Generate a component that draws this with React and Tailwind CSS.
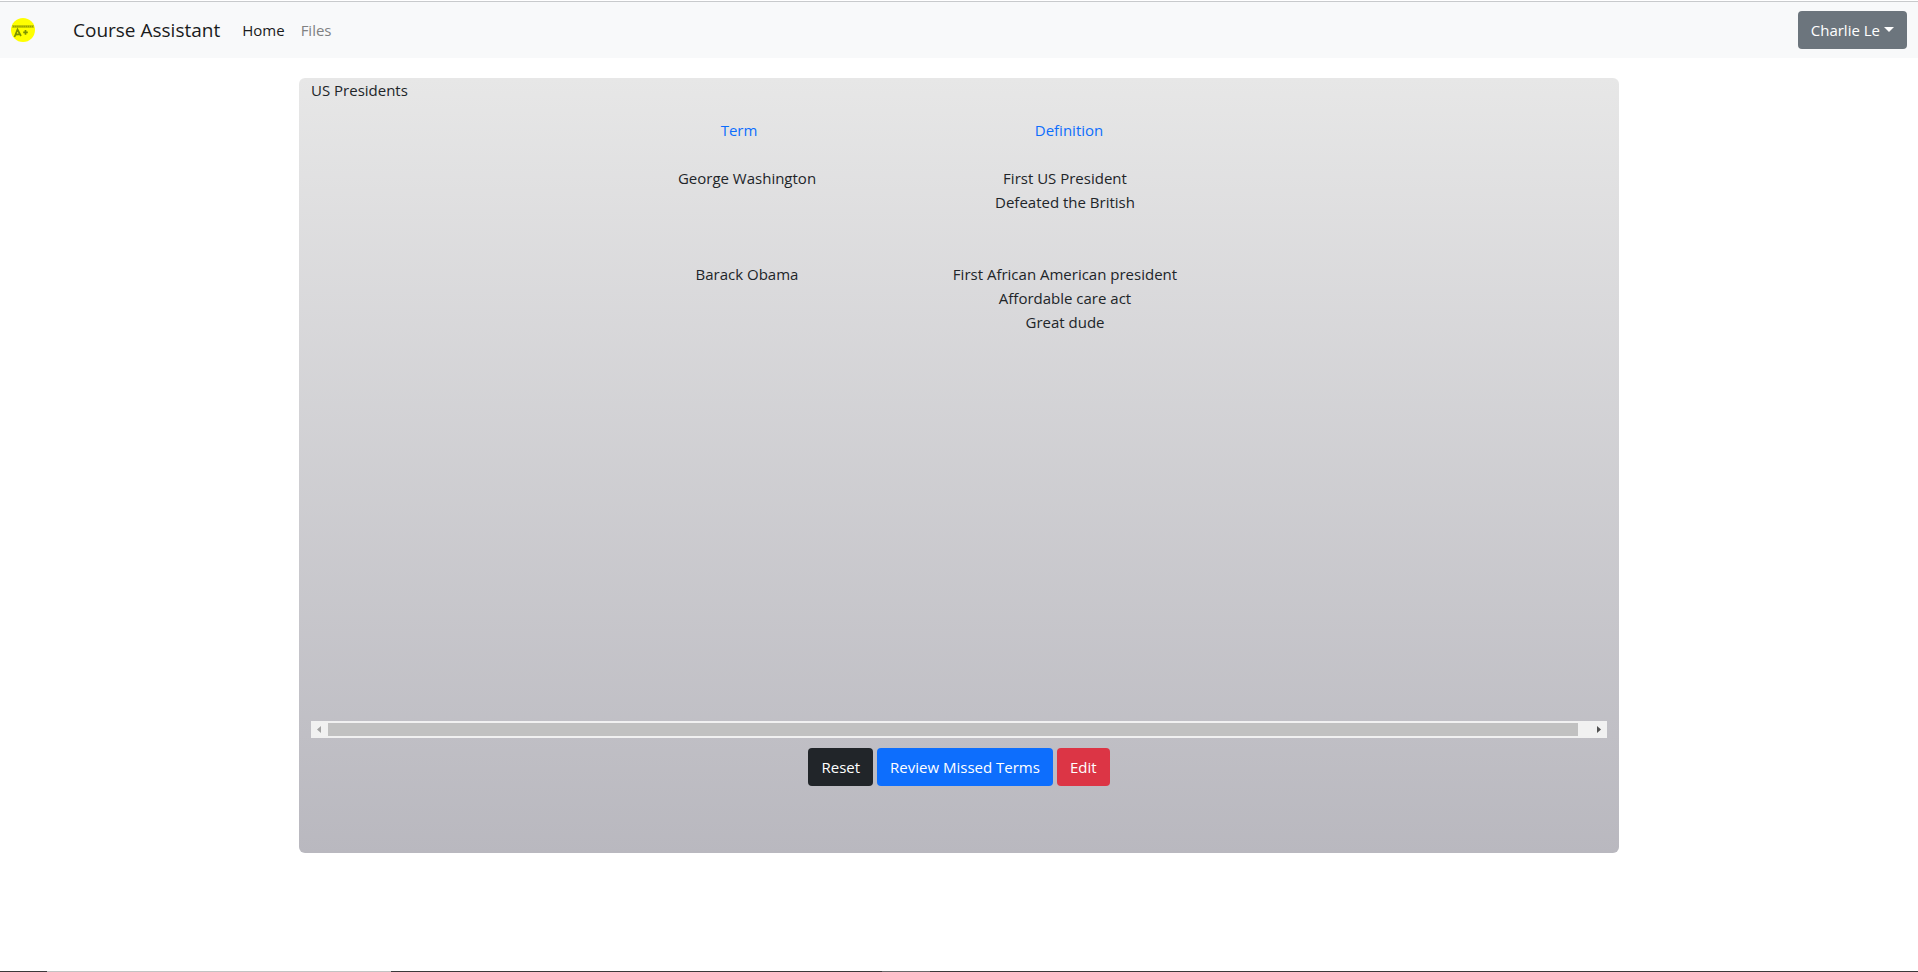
const cards = [
  { term: "George Washington", lines: ["First US President", "Defeated the British"], space: "pb-12" },
  {
    term: "Barack Obama",
    lines: ["First African American president", "Affordable care act", "Great dude"],
    space: "",
  },
];

const columns = "grid grid-cols-[25fr_30fr_30fr_35fr]";
const button = "h-[38px] rounded px-[13px] text-white";

function Logo() {
  return (
    <svg viewBox="0 0 24 24" className="size-6" aria-hidden="true">
      <circle cx="12" cy="12" r="12" fill="#ffff00" />
      <path d="M1 7h22v3H1z" fill="#b4bc00" opacity=".65" />
      <path d="M2 8.500h20" stroke="#5f7000" strokeWidth="1.400" strokeDasharray="1.400 .7" opacity=".5" />
      <path d="M3.500 19l3-7.500 3.500 6.500M5 16.700l4.300-.6M12.200 14.400h4.600M14.500 12v4.800" fill="none" stroke="#7c9200" strokeWidth="1.700" />
    </svg>
  );
}

function Navbar() {
  return (
    <nav className="mt-px flex h-[57px] items-center border-t border-[#c8cacc] bg-[#f8f9fa] px-[11px]">
      <a href="#" aria-label="Logo"><Logo /></a>
      <a href="#" className="ml-[38px] text-[19px] leading-8 text-[#1a1b1c]">Course Assistant</a>
      <a href="#" className="ml-[22px] text-[#1a1b1c]">Home</a>
      <a href="#" className="ml-4 text-[#808182]">Files</a>
      <button type="button" className={`${button} ml-auto flex items-center gap-1 bg-[#6c757d]`}>
        Charlie Le
        <svg viewBox="0 0 10 5" className="mb-0.5 h-[5px] w-[10px]" aria-hidden="true">
          <path d="M0 0h10L5 5z" fill="#fff" />
        </svg>
      </button>
    </nav>
  );
}

function ScrollTrack() {
  return (
    <div className="flex h-[17px] items-center bg-[#f1f1f1]" aria-hidden="true">
      <svg viewBox="0 0 17 17" className="size-[17px]"><path d="M10 5v7L6 8.500z" fill="#a3a3a3" /></svg>
      <div className="h-[13px] flex-1 bg-[#c1c1c1]" />
      <div className="w-3" />
      <svg viewBox="0 0 17 17" className="size-[17px]"><path d="M7 5v7l4-3.500z" fill="#505050" /></svg>
    </div>
  );
}

export default function App() {
  return (
    <div className="flex min-h-screen flex-col bg-white font-['Open_Sans','Noto_Sans',sans-serif] text-[15px] leading-6 text-[#212529]">
      <Navbar />
      <main className="mx-auto mt-5 mb-8 w-full max-w-[1320px] rounded-md bg-linear-to-b from-[#e7e7e7] to-[#b9b8bf] px-3 pb-[67px]">
        <h1>US Presidents</h1>
        <div className="h-[619px] pt-4">
          <table className="block">
            <thead className="-mx-3 block">
              <tr className={columns}>
                <th scope="col" className="col-start-2 font-normal text-[#0d6efd]">Term</th>
                <th scope="col" className="font-normal text-[#0d6efd]">Definition</th>
              </tr>
            </thead>
            <tbody className="block px-3 pt-6">
              {cards.map((card) => (
                <tr key={card.term} className={`${columns} ${card.space}`}>
                  <td className="col-start-2 text-center">{card.term}</td>
                  <td className="text-center">
                    {card.lines.map((line) => (
                      <p key={line}>{line}</p>
                    ))}
                  </td>
                </tr>
              ))}
            </tbody>
          </table>
        </div>
        <ScrollTrack />
        <div className="mt-[10px] flex justify-center gap-1">
          <button type="button" className={`${button} bg-[#212529]`}>Reset</button>
          <button type="button" className={`${button} bg-[#0d6efd]`}>Review Missed Terms</button>
          <button type="button" className={`${button} bg-[#dc3545]`}>Edit</button>
        </div>
      </main>
      <div className="mt-auto flex h-px bg-[#3b393b]">
        <div className="ml-[47px] w-[344px] bg-[#c3c3c3]" />
        <div className="ml-[491px] w-12 bg-[#6a686a]" />
      </div>
    </div>
  );
}
